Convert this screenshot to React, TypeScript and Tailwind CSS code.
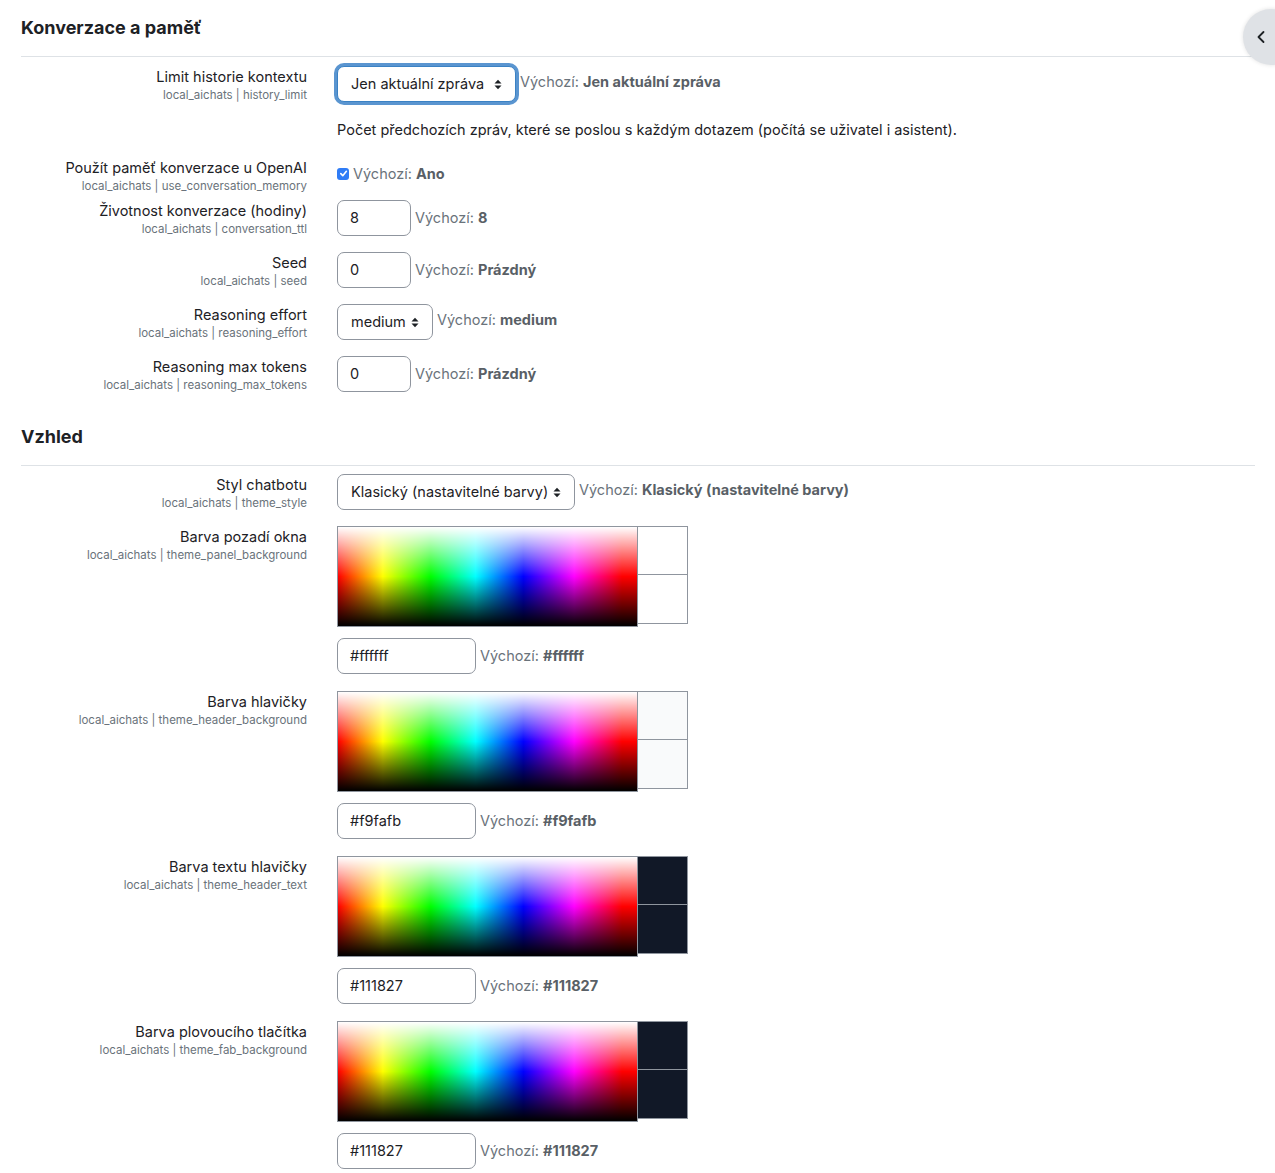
import React from 'react';
import { ChevronLeft } from 'lucide-react';

const font = "font-['Inter','Liberation_Sans',sans-serif]";

const SelectArrows = () => (
  <svg width="8" height="11" viewBox="0 0 8 11" className="shrink-0">
    <path d="M0.5 4.5 L4 0.8 L7.5 4.5 Z" fill="#1d2125" />
    <path d="M0.5 6.5 L4 10.2 L7.5 6.5 Z" fill="#1d2125" />
  </svg>
);

const Default = ({ value }: { value: string }) => (
  <span className="text-[14.5px] text-[#6a737b] whitespace-nowrap">
    Výchozí: <span className="font-bold text-[#595f66]">{value}</span>
  </span>
);

interface RowProps {
  label: string;
  name: string;
  className?: string;
  children: React.ReactNode;
}

const Row: React.FC<RowProps> = ({ label, name, className = 'mb-4', children }) => (
  <div className={`flex gap-[30px] ${className}`}>
    <div className="w-[286px] shrink-0 text-right">
      <div className="text-[14.5px] leading-[22px] text-[#1d2125]">{label}</div>
      <div className="text-[11.5px] leading-[14px] text-[#6a737b]">local_aichats | {name}</div>
    </div>
    <div className="flex-1 min-w-0">{children}</div>
  </div>
);

const Select = ({ value, width, focused = false }: { value: string; width: string; focused?: boolean }) => (
  <div
    className={`${width} h-[36px] flex items-center justify-between pl-[13px] pr-[13px] rounded-[7px] bg-white text-[14.5px] text-[#1d2125] ${
      focused ? 'border border-[#3b82c4] ring-[3px] ring-[#5a95d0]' : 'border border-[#8f959e]'
    }`}
  >
    <span className="whitespace-nowrap">{value}</span>
    <SelectArrows />
  </div>
);

const TextInput = ({ value, width }: { value: string; width: string }) => (
  <div className={`${width} h-[36px] flex items-center px-[12px] rounded-[7px] border border-[#8f959e] bg-white text-[14.5px] text-[#1d2125]`}>
    {value}
  </div>
);

const ColourPicker = ({ value }: { value: string }) => (
  <div>
    <div className="flex items-start">
      <div className="w-[301px] h-[101px] border border-[#8f959e] bg-[linear-gradient(to_right,#ff0000_0%,#ffff00_15%,#00ff00_31%,#00ffff_46%,#0000ff_62%,#ff00ff_79%,#ff0000_95%,#ff0000_100%)]">
        <div className="w-full h-full bg-[linear-gradient(to_bottom,#ffffff_0%,rgba(255,255,255,0)_50%,rgba(0,0,0,0)_50%,#000000_100%)]" />
      </div>
      <div className="w-[50px] h-[98px] border border-l-0 border-[#8f959e] flex flex-col">
        <div className="h-[48px] border-b border-[#8f959e]" style={{ backgroundColor: value }} />
        <div className="flex-1" style={{ backgroundColor: value }} />
      </div>
    </div>
    <div className="flex items-center gap-1 mt-[11px]">
      <TextInput value={value} width="w-[139px]" />
      <Default value={value} />
    </div>
  </div>
);

const Heading = ({ children, className = '' }: { children: React.ReactNode; className?: string }) => (
  <h3 className={`text-[18px] leading-[24px] font-bold text-[#1d2125] pb-4 border-b border-[#dee2e6] ${className}`}>
    {children}
  </h3>
);

export default function App() {
  return (
    <div className={`relative overflow-hidden min-h-[1173px] bg-white ${font}`}>
      <div className="pl-[21px] pr-[20px] pt-4 pb-2">
        <Heading>Konverzace a paměť</Heading>

        <div className="mt-[9px]">
          <Row label="Limit historie kontextu" name="history_limit">
            <div className="flex items-start gap-1">
              <Select value="Jen aktuální zpráva" width="w-[179px]" focused />
              <div className="pt-[3px]">
                <Default value="Jen aktuální zpráva" />
              </div>
            </div>
            <p className="mt-[17px] text-[14.5px] leading-[22px] text-[#1d2125]">
              Počet předchozích zpráv, které se poslou s každým dotazem (počítá se uživatel i asistent).
            </p>
          </Row>

          <Row label="Použít paměť konverzace u OpenAI" name="use_conversation_memory" className="mb-[7px]">
            <div className="flex items-center gap-1 pt-[6px]">
              <span className="w-[12px] h-[12px] rounded-[3px] bg-[#2f7cf6] flex items-center justify-center">
                <svg width="9" height="9" viewBox="0 0 10 10">
                  <path d="M2 5.2 L4.2 7.4 L8.2 2.6" stroke="#fff" strokeWidth="1.8" fill="none" strokeLinecap="round" strokeLinejoin="round" />
                </svg>
              </span>
              <Default value="Ano" />
            </div>
          </Row>

          <Row label="Životnost konverzace (hodiny)" name="conversation_ttl">
            <div className="flex items-center gap-1">
              <TextInput value="8" width="w-[74px]" />
              <Default value="8" />
            </div>
          </Row>

          <Row label="Seed" name="seed">
            <div className="flex items-center gap-1">
              <TextInput value="0" width="w-[74px]" />
              <Default value="Prázdný" />
            </div>
          </Row>

          <Row label="Reasoning effort" name="reasoning_effort">
            <div className="flex items-start gap-1">
              <Select value="medium" width="w-[96px]" />
              <div className="pt-[3px]">
                <Default value="medium" />
              </div>
            </div>
          </Row>

          <Row label="Reasoning max tokens" name="reasoning_max_tokens">
            <div className="flex items-center gap-1">
              <TextInput value="0" width="w-[74px]" />
              <Default value="Prázdný" />
            </div>
          </Row>
        </div>

        <Heading className="mt-[33px]">Vzhled</Heading>

        <div className="mt-2">
          <Row label="Styl chatbotu" name="theme_style">
            <div className="flex items-start gap-1">
              <Select value="Klasický (nastavitelné barvy)" width="w-[238px]" />
              <div className="pt-[3px]">
                <Default value="Klasický (nastavitelné barvy)" />
              </div>
            </div>
          </Row>

          <Row label="Barva pozadí okna" name="theme_panel_background" className="mb-[17px]">
            <ColourPicker value="#ffffff" />
          </Row>

          <Row label="Barva hlavičky" name="theme_header_background" className="mb-[17px]">
            <ColourPicker value="#f9fafb" />
          </Row>

          <Row label="Barva textu hlavičky" name="theme_header_text" className="mb-[17px]">
            <ColourPicker value="#111827" />
          </Row>

          <Row label="Barva plovoucího tlačítka" name="theme_fab_background" className="mb-0">
            <ColourPicker value="#111827" />
          </Row>
        </div>
      </div>

      <button className="absolute top-[9px] right-[-24px] w-14 h-14 rounded-full bg-[#dfe2e6] shadow-[0_0_4px_rgba(0,0,0,0.12)] flex items-center pl-2 text-[#1d2125]">
        <ChevronLeft size={20} strokeWidth={2.2} />
      </button>
    </div>
  );
}
